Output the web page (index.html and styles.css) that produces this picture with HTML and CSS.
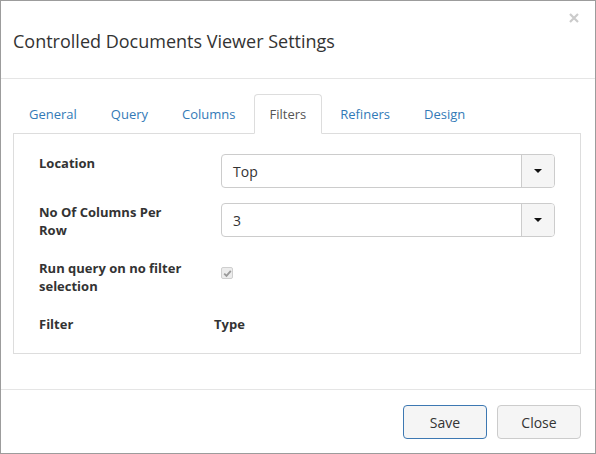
FILE: index.html
```html
<!DOCTYPE html>
<html>
<head>
<meta charset="utf-8">
<link rel="stylesheet" href="styles.css">
</head>
<body>
<div class="modal">
  <div class="modal-header">
    <h4 class="modal-title">Controlled Documents Viewer Settings</h4>
    <span class="close" aria-label="Close"><svg width="10" height="10" viewBox="0 0 10 10"><path d="M1 1 L9 9 M9 1 L1 9" stroke="#cbcbcb" stroke-width="2.2" stroke-linecap="butt"/></svg></span>
  </div>
  <div class="modal-body">
    <ul class="nav-tabs">
      <li><a>General</a></li>
      <li><a>Query</a></li>
      <li><a>Columns</a></li>
      <li class="active"><a>Filters</a></li>
      <li><a>Refiners</a></li>
      <li><a>Design</a></li>
    </ul>
    <div class="tab-panel">
      <div class="form-row">
        <label class="form-label">Location</label>
        <div class="select">
          <span class="select-value">Top</span>
          <span class="select-btn"><span class="caret"></span></span>
        </div>
      </div>
      <div class="form-row">
        <label class="form-label">No Of Columns Per Row</label>
        <div class="select">
          <span class="select-value">3</span>
          <span class="select-btn"><span class="caret"></span></span>
        </div>
      </div>
      <div class="form-row check-row">
        <label class="form-label">Run query on no filter selection</label>
        <div class="checkbox"><svg width="9" height="9" viewBox="0 0 9 9"><path d="M1.2 4.6 L3.5 6.9 L7.8 1.8" fill="none" stroke="#9a9a9a" stroke-width="1.8"/></svg></div>
      </div>
      <div class="filter-head">
        <span class="fh-filter">Filter</span>
        <span class="fh-type">Type</span>
      </div>
    </div>
  </div>
  <div class="modal-footer">
    <button class="btn btn-save">Save</button>
    <button class="btn">Close</button>
  </div>
</div>
</body>
</html>
```
FILE: styles.css
```css
* { box-sizing: border-box; }
html, body { margin: 0; padding: 0; background: #fff; }
body { font-family: "Open Sans", "Liberation Sans", sans-serif; color: #333; font-size: 13px; }

.modal {
  width: 596px;
  height: 454px;
  border: 1px solid #9c9c9c;
  background: #fff;
  display: flex;
  flex-direction: column;
}

.modal-header {
  position: relative;
  padding: 27px 14px 24px 12px;
  border-bottom: 1px solid #e5e5e5;
}
.modal-title {
  margin: 0;
  font-size: 18px;
  line-height: 26px;
  font-weight: 400;
  color: #333;
}
.close {
  position: absolute;
  top: 12px;
  right: 16px;
  width: 10px;
  height: 10px;
  display: block;
}
.close svg { display: block; }

.modal-body {
  padding: 15px 14px 35px 12px;
}

.nav-tabs {
  list-style: none;
  margin: 0;
  padding: 0;
  display: flex;
  border-bottom: 1px solid #ddd;
}
.nav-tabs li {
  margin-right: 2px;
  margin-bottom: -1px;
}
.nav-tabs a {
  display: block;
  padding: 10px 15px;
  line-height: 18px;
  font-size: 13px;
  color: #337ab7;
  border: 1px solid transparent;
  border-radius: 4px 4px 0 0;
}
.nav-tabs li.active a {
  color: #555;
  background: #fff;
  border-color: #ddd;
  border-bottom-color: #fff;
}

.tab-panel {
  border: 1px solid #ddd;
  border-top: none;
  padding: 20px 25px 20px 25px;
}

.form-row {
  display: grid;
  grid-template-columns: 182px 1fr;
  align-items: start;
  margin-bottom: 15px;
}
.form-label {
  font-weight: 700;
  font-size: 13px;
  line-height: 18px;
  color: #333;
  max-width: 150px;
}
.check-row .form-label { padding-top: 5px; }

.select {
  height: 34px;
  border: 1px solid #ccc;
  border-radius: 4px;
  display: flex;
  align-items: stretch;
  background: #fff;
}
.select-value {
  flex: 1;
  padding-left: 11px;
  font-size: 14px;
  line-height: 33px;
  color: #333;
}
.select-btn {
  width: 33px;
  background: #f5f5f5;
  border-left: 1px solid #ccc;
  border-radius: 0 3px 3px 0;
  display: flex;
  align-items: center;
  justify-content: center;
}
.caret {
  width: 0;
  height: 0;
  border-left: 4px solid transparent;
  border-right: 4px solid transparent;
  border-top: 4px solid #111;
}

.checkbox {
  margin-top: 13px;
  width: 12px;
  height: 12px;
  border: 1px solid #cfcfcf;
  border-radius: 2px;
  background: #ececec;
  display: flex;
  align-items: center;
  justify-content: center;
}
.checkbox svg { display: block; }

.filter-head {
  margin-top: 20px;
  display: flex;
  font-weight: 700;
  font-size: 13px;
  line-height: 18px;
  color: #333;
}
.fh-filter { width: 175px; }

.modal-footer {
  border-top: 1px solid #e5e5e5;
  padding: 15px 14px 14px 12px;
  display: flex;
  justify-content: flex-end;
  gap: 10px;
}
.btn {
  width: 84px;
  height: 34px;
  border: 1px solid #ccc;
  border-radius: 4px;
  background: #f5f5f5;
  font-family: "Open Sans", "Liberation Sans", sans-serif;
  font-size: 14px;
  color: #333;
  padding: 0;
}
.btn-save { border-color: #3d78b2; }
```
